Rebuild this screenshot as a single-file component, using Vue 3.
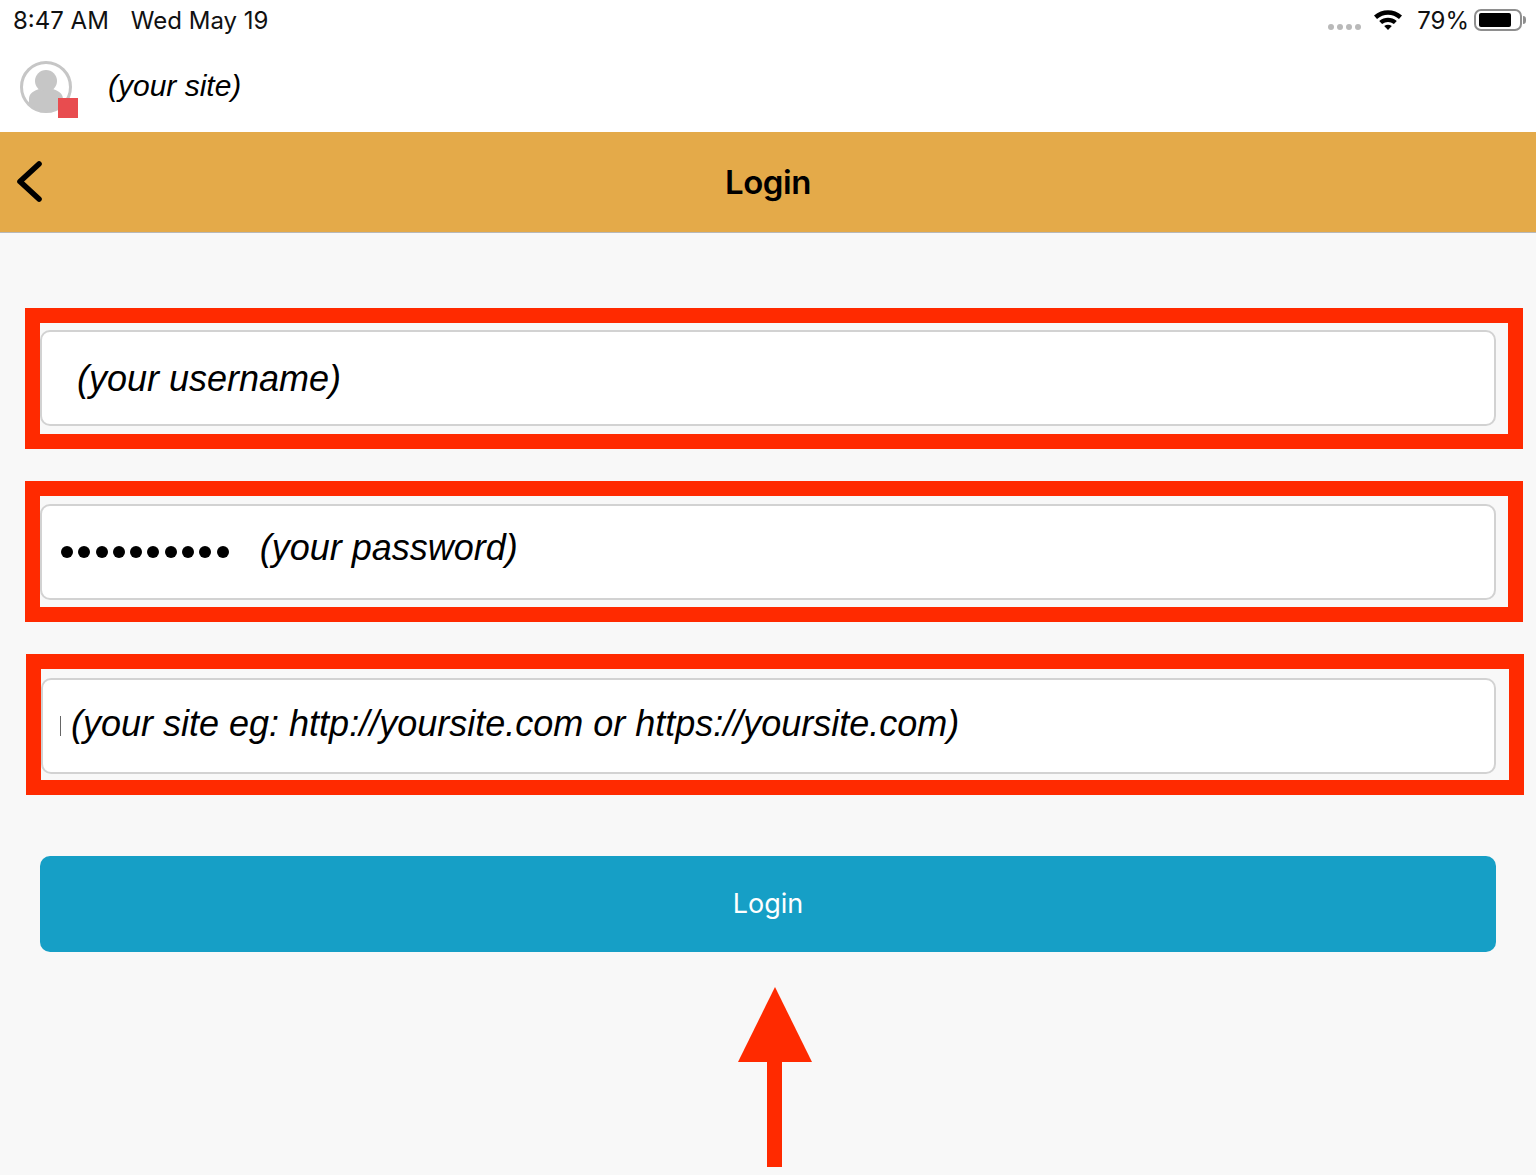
<script setup>
const fields = [
  { id: 'user', text: '(your username)' },
  { id: 'pass', text: '(your password)', dots: 10 },
  { id: 'site', text: '(your site eg: http://yoursite.com or https://yoursite.com)', caret: true }
]
</script>

<template>
  <div class="page">
    <div class="status">
      <div class="status-left"><span>8:47 AM</span><span>Wed May 19</span></div>
      <div class="status-right">
        <span class="signal"><i></i><i></i><i></i><i></i></span>
        <svg class="wifi" width="28" height="21" viewBox="0 0 28 21">
          <path d="M0 6.6C8 -.6 20 -.6 28 6.6L25 9.9C18.6 4.2 9.4 4.2 3 9.9Z" fill="#000"/>
          <path d="M5.2 12C10.6 7.6 17.4 7.6 22.8 12L19.9 15.1C16.2 12.2 11.8 12.2 8.1 15.1Z" fill="#000"/>
          <path d="M10.2 17C12.5 15.2 15.5 15.2 17.8 17L14 21Z" fill="#000"/>
        </svg>
        <span class="pct">79%</span>
        <span class="battery"><span class="charge"></span></span>
        <span class="nub"></span>
      </div>
    </div>

    <div class="account">
      <div class="avatar">
        <svg width="54" height="54" viewBox="0 0 54 54">
          <defs><clipPath id="avatar-clip"><circle cx="26" cy="26" r="24"/></clipPath></defs>
          <circle cx="26" cy="26" r="24.5" fill="#fff" stroke="#c6c6c6" stroke-width="3"/>
          <circle cx="26" cy="20" r="11" fill="#c6c6c6"/>
          <path d="M9 52V38C9 32 14 30 19 28C23 31 29 31 33 28C38 30 43 32 43 38V52Z" fill="#c6c6c6" clip-path="url(#avatar-clip)"/>
        </svg>
        <span class="badge"></span>
      </div>
      <span class="site-name">(your site)</span>
    </div>

    <header class="nav">
      <svg class="back" width="32" height="46" viewBox="0 0 32 46">
        <path d="M27 5L8 22.5L27 40" fill="none" stroke="#000" stroke-width="5.6" stroke-linecap="round" stroke-linejoin="round"/>
      </svg>
      <h1>Login</h1>
    </header>

    <main class="content">
      <div v-for="f in fields" :key="f.id" class="frame" :class="'frame-' + f.id">
        <div class="input">
          <span v-if="f.dots" class="dots"><i v-for="n in f.dots" :key="n"></i></span>
          <span v-if="f.caret" class="caret"></span>
          <span class="value">{{ f.text }}</span>
        </div>
      </div>

      <button class="login">Login</button>

      <div class="arrow">
        <span class="head"></span>
        <span class="shaft"></span>
      </div>
    </main>
  </div>
</template>

<style>
html, body { margin: 0; background: #f8f8f8; }
</style>

<style scoped>
.page {
  width: 1536px;
  height: 1175px;
  overflow: hidden;
  background: #f8f8f8;
  font-family: "Liberation Sans", Arial, sans-serif;
  color: #000;
}
.status {
  height: 42px;
  background: #fff;
  display: flex;
  justify-content: space-between;
  align-items: center;
  padding: 0 10px 2px 13px;
  box-sizing: border-box;
  font-family: Inter, "Liberation Sans", sans-serif;
  font-size: 24px;
  color: #111;
}
.status-left { display: flex; gap: 22px; }
.status-right { display: flex; align-items: center; }
.signal { display: flex; gap: 3px; margin-top: 14px; margin-right: 13px; }
.signal i { width: 6px; height: 6px; border-radius: 50%; background: #b9b9b9; }
.wifi { margin-right: 15px; margin-top: -2px; }
.pct { margin-right: 5px; }
.battery {
  width: 48px;
  height: 22px;
  box-sizing: border-box;
  border: 2px solid #8e8e8e;
  border-radius: 7px;
  padding: 2px 3px;
  display: flex;
}
.charge { width: 32px; background: #000; border-radius: 2px; }
.nub { width: 3px; height: 8px; background: #8e8e8e; border-radius: 0 3px 3px 0; margin-left: 1px; }
.account {
  height: 90px;
  background: #fff;
  display: flex;
  align-items: center;
  padding-left: 20px;
  padding-bottom: 2px;
  box-sizing: border-box;
}
.avatar { position: relative; width: 54px; height: 54px; margin-top: 4px; }
.avatar svg { display: block; }
.badge { position: absolute; left: 38px; top: 37px; width: 20px; height: 20px; background: #e84c4f; }
.site-name { margin-left: 34px; font-size: 30px; font-style: italic; color: #000; }
.nav {
  position: relative;
  height: 101px;
  box-sizing: border-box;
  background: #e4aa49;
  border-bottom: 1px solid #b8b8b8;
  display: flex;
  align-items: center;
  justify-content: center;
}
.back { position: absolute; left: 12px; top: 27px; }
.nav h1 { margin: 0; font-family: Inter, sans-serif; font-size: 33px; font-weight: 600; letter-spacing: -0.4px; color: #000; }
.content { padding-top: 75px; }
.frame {
  width: 1498px;
  height: 141px;
  box-sizing: border-box;
  margin-left: 25px;
  margin-bottom: 32px;
  border: 15px solid #ff2a00;
  padding-top: 7px;
}
.frame-pass { padding-top: 8px; }
.frame-site { margin-left: 26px; padding-top: 9px; margin-bottom: 61px; }
.input {
  width: 1456px;
  height: 96px;
  box-sizing: border-box;
  background: #fff;
  border: 2px solid #d2d2d2;
  border-radius: 10px;
  display: flex;
  align-items: center;
  font-style: italic;
  color: #000;
  font-size: 36px;
  padding-left: 35px;
}
.frame-pass .input { padding-left: 19px; }
.frame-site .input { width: 1455px; padding-left: 17px; }
.value { position: relative; top: 1px; white-space: nowrap; }
.frame-pass .value { top: -4px; margin-left: 31px; }
.frame-site .value { top: -2px; margin-left: 10px; }
.dots { display: flex; gap: 5.3px; margin-top: -1px; }
.dots i { width: 12px; height: 12px; border-radius: 50%; background: #000; }
.caret { width: 1px; height: 20px; background: #666; }
.login {
  display: block;
  width: 1456px;
  height: 96px;
  margin: 0 0 0 40px;
  border: 0;
  border-radius: 10px;
  background: #169fc6;
  color: #fff;
  font-family: Inter, "Liberation Sans", sans-serif;
  font-size: 27px;
  padding: 0 0 2px;
}
.arrow {
  display: flex;
  flex-direction: column;
  align-items: center;
  width: 75px;
  margin: 35px 0 0 737px;
}
.head {
  width: 0;
  height: 0;
  border-left: 37.5px solid transparent;
  border-right: 37.5px solid transparent;
  border-bottom: 75px solid #ff2a00;
}
.shaft { width: 15px; height: 105px; background: #ff2a00; margin-left: -1px; }
</style>
